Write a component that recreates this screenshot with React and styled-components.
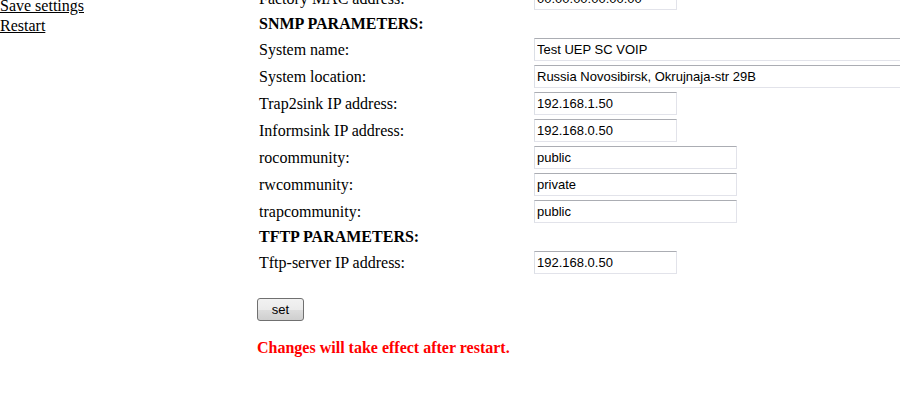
import React from 'react'
import styled, { createGlobalStyle } from 'styled-components'

const GlobalStyle = createGlobalStyle`
  html, body {
    margin: 0;
    padding: 0;
    background: #fff;
    overflow: hidden;
  }
  body {
    font-family: 'Liberation Serif', 'Times New Roman', serif;
    font-size: 16px;
    color: #000;
  }
`

const snmp = [
  { label: 'System name:', value: 'Test UEP SC VOIP', size: 'wide' },
  { label: 'System location:', value: 'Russia Novosibirsk, Okrujnaja-str 29B', size: 'wide' },
  { label: 'Trap2sink IP address:', value: '192.168.1.50', size: 'short' },
  { label: 'Informsink IP address:', value: '192.168.0.50', size: 'short' },
  { label: 'rocommunity:', value: 'public', size: 'mid' },
  { label: 'rwcommunity:', value: 'private', size: 'mid' },
  { label: 'trapcommunity:', value: 'public', size: 'mid' }
]

const widths = { short: '143px', mid: '203px', wide: '420px' }

export default function App() {
  return (
    <>
      <GlobalStyle />
      <Page>
        <Nav>
          <NavLink href="#save">Save settings</NavLink>
          <NavLink href="#restart">Restart</NavLink>
        </Nav>
        <Main>
          <Params>
            <Label>Factory MAC address:</Label>
            <Field>
              <Input size="short" defaultValue="00:00:00:00:00:00" />
            </Field>
            <Heading>SNMP PARAMETERS:</Heading>
            {snmp.map(row => (
              <React.Fragment key={row.label}>
                <Label>{row.label}</Label>
                <Field>
                  <Input size={row.size} defaultValue={row.value} />
                </Field>
              </React.Fragment>
            ))}
            <Heading>TFTP PARAMETERS:</Heading>
            <Label>Tftp-server IP address:</Label>
            <Field>
              <Input size="short" defaultValue="192.168.0.50" />
            </Field>
          </Params>
          <SetButton type="button">set</SetButton>
          <Notice>Changes will take effect after restart.</Notice>
        </Main>
      </Page>
    </>
  )
}

const Page = styled.div`
  display: flex;
  align-items: flex-start;
  margin-top: -14px;
`

const Nav = styled.div`
  width: 257px;
  flex: none;
  display: flex;
  flex-direction: column;
  padding-top: 10px;
  line-height: 20px;
`

const NavLink = styled.a`
  color: #000;
  text-decoration: underline;
  align-self: flex-start;
`

const Main = styled.div`
  flex: 1;
  min-width: 0;
  display: flex;
  flex-direction: column;
  align-items: flex-start;
  padding-top: 1px;
`

const Params = styled.div`
  display: grid;
  grid-template-columns: 275px auto;
  row-gap: 4px;
  padding-left: 2px;
`

const Label = styled.div`
  display: flex;
  align-items: center;
  height: 23px;
`

const Field = styled.div`
  display: flex;
  align-items: center;
`

const Heading = styled.div`
  grid-column: 1 / -1;
  height: 20px;
  display: flex;
  align-items: center;
  font-weight: bold;
`

const Input = styled.input.attrs({ type: 'text' })`
  box-sizing: border-box;
  width: ${p => widths[p.size]};
  height: 23px;
  padding: 0 2px;
  border: 1px solid #e2e3ea;
  border-top-color: #abadb3;
  border-left-color: #dbdfe6;
  background: #fff;
  font-family: 'Liberation Sans', Arial, sans-serif;
  font-size: 13px;
  color: #000;
  outline: none;
`

const SetButton = styled.button`
  margin-top: 24px;
  box-sizing: border-box;
  width: 47px;
  height: 23px;
  border: 1px solid #707070;
  border-radius: 3px;
  background: linear-gradient(#f2f2f2 0%, #ebebeb 50%, #dddddd 51%, #cfcfcf 100%);
  font-family: 'Liberation Sans', Arial, sans-serif;
  font-size: 13px;
  color: #000;
  padding: 0;
`

const Notice = styled.p`
  margin: 18px 0 0;
  color: #f00;
  font-weight: bold;
`
